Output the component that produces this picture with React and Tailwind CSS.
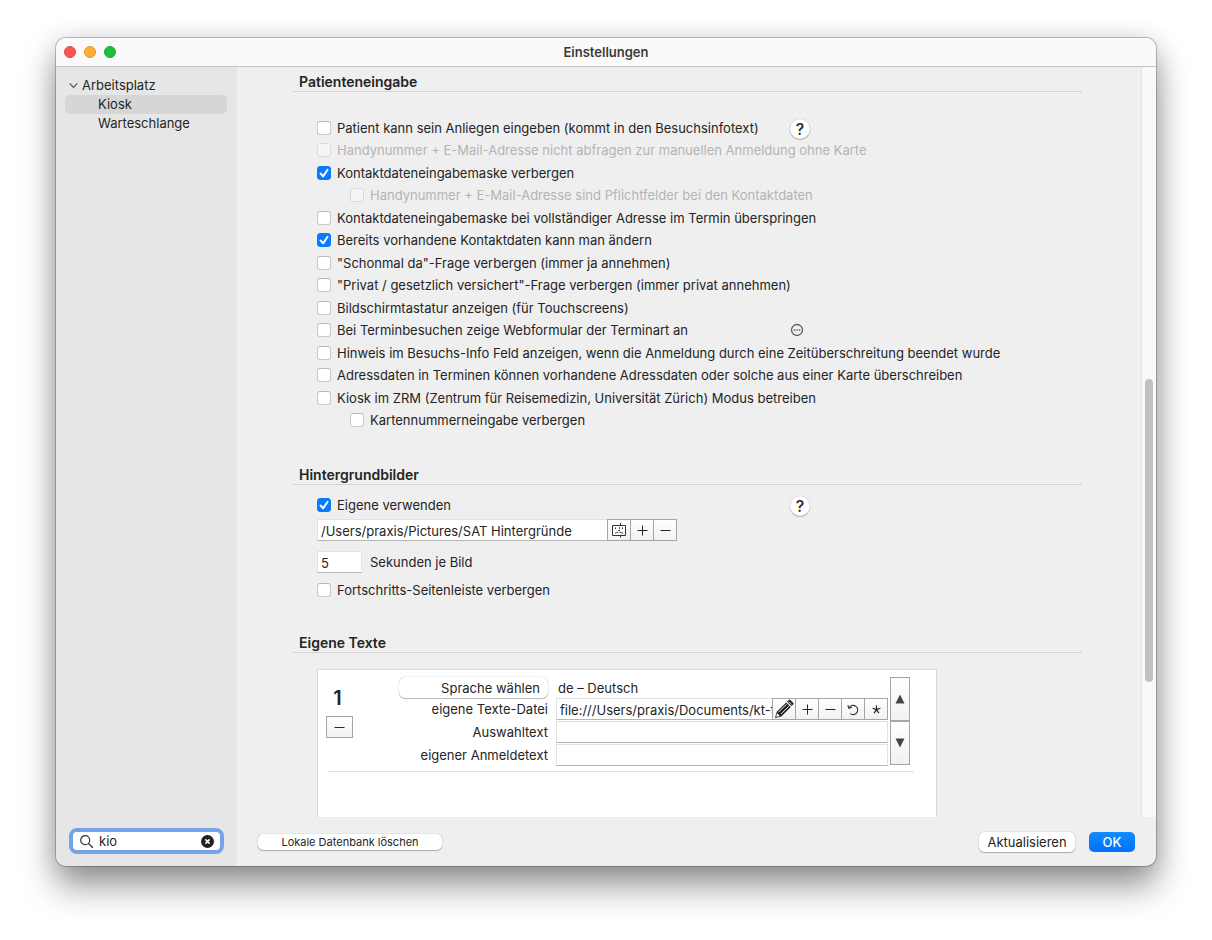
import React, { useState } from 'react';

const kioskOptions = [
  { id: 'anliegen', label: 'Patient kann sein Anliegen eingeben (kommt in den Besuchsinfotext)', help: true },
  { id: 'handy-abfragen', label: 'Handynummer + E-Mail-Adresse nicht abfragen zur manuellen Anmeldung ohne Karte', disabled: true },
  { id: 'maske-verbergen', label: 'Kontaktdateneingabemaske verbergen', checked: true },
  { id: 'handy-pflicht', label: 'Handynummer + E-Mail-Adresse sind Pflichtfelder bei den Kontaktdaten', disabled: true, indent: true },
  { id: 'maske-ueberspringen', label: 'Kontaktdateneingabemaske bei vollständiger Adresse im Termin überspringen' },
  { id: 'daten-aendern', label: 'Bereits vorhandene Kontaktdaten kann man ändern', checked: true },
  { id: 'schonmal-da', label: '"Schonmal da"-Frage verbergen (immer ja annehmen)' },
  { id: 'privat', label: '"Privat / gesetzlich versichert"-Frage verbergen (immer privat annehmen)' },
  { id: 'tastatur', label: 'Bildschirmtastatur anzeigen (für Touchscreens)' },
  { id: 'webformular', label: 'Bei Terminbesuchen zeige Webformular der Terminart an', more: true },
  { id: 'hinweis', label: 'Hinweis im Besuchs-Info Feld anzeigen, wenn die Anmeldung durch eine Zeitüberschreitung beendet wurde' },
  { id: 'adressdaten', label: 'Adressdaten in Terminen können vorhandene Adressdaten oder solche aus einer Karte überschreiben' },
  { id: 'zrm', label: 'Kiosk im ZRM (Zentrum für Reisemedizin, Universität Zürich) Modus betreiben' },
  { id: 'kartennummer', label: 'Kartennummerneingabe verbergen', indent: true },
];

const fieldClass = 'h-[22px] min-w-0 border border-[#e2e2e2] border-b-[#b5b5b5] bg-white px-[3px] pt-px text-[13px] outline-none';

function PlusIcon() {
  return (
    <svg width="11" height="11" viewBox="0 0 11 11" stroke="#262626" fill="none">
      <path d="M5.5 0.5v10M0.5 5.5h10" />
    </svg>
  );
}

function MinusIcon() {
  return (
    <svg width="11" height="11" viewBox="0 0 11 11" stroke="#262626" fill="none">
      <path d="M0.5 5.5h10" />
    </svg>
  );
}

// Finder face in a small frame
function FinderIcon() {
  return (
    <svg width="15" height="15" viewBox="0 0 15 15" stroke="#333" fill="none">
      <path d="M0.5 2.5h13v10H0.5z" />
      <path d="M8.5 0v2.5M8.5 12.5v2" />
      <path d="M7.5 4v3.5M6 7.5h2" strokeWidth="0.8" strokeDasharray="2 0.6" />
      <path d="M3.5 4.5v1.5M10.5 4.5v1.5" />
      <path d="M3 10.3l1.6-.9h1.6M7.6 9.4h1.6l1.8.9" strokeWidth="0.9" />
    </svg>
  );
}

function PencilIcon() {
  return (
    <svg width="20" height="20" viewBox="0 0 20 20" fill="#222" className="shrink-0">
      <path d="M1 19l1.8-6.2L12.2 3.4l4.6 4.6-9.5 9.4z" />
      <path d="M13 2.6l1.7-1.7q.8-.7 1.6 0l2.9 2.9q.7.8 0 1.6l-1.7 1.7z" />
      <path d="M4.5 13.2l8-8M6.8 15.2l8-8" stroke="#fff" strokeWidth="0.9" />
      <path d="M3.1 14.2l2.7 2.7-2.9.9-.7-.7z" fill="#fff" />
      <path d="M14.5 2.3l3.3 3.3" stroke="#fff" strokeWidth="0.7" />
    </svg>
  );
}

function ResetIcon() {
  return (
    <svg width="13" height="13" viewBox="0 0 13 13" stroke="#333" strokeWidth="1.1" fill="none">
      <path d="M2 4.9A4.6 4.6 0 1 1 3.2 10.6" />
      <path d="M0.8 2.2l1.2 3 3-1" />
    </svg>
  );
}

function StarIcon() {
  return (
    <svg width="9" height="9" viewBox="0 0 9 9" stroke="#222" strokeWidth="1.2" fill="none">
      <path d="M4.5 4.6V0.5M4.5 4.6L0.6 3.3M4.5 4.6l3.9-1.3M4.5 4.6L2.1 8.2M4.5 4.6l2.4 3.6" />
    </svg>
  );
}

function ToolButton({ label, children }) {
  return (
    <button
      type="button"
      aria-label={label}
      className="-ml-px flex h-[22px] w-6 shrink-0 items-center justify-center border border-[#a5a5a5] bg-linear-to-b from-white to-[#f1f1f1] first:ml-0"
    >
      {children}
    </button>
  );
}

function HelpButton() {
  return (
    <button
      type="button"
      aria-label="Hilfe"
      className="flex size-5 items-center justify-center self-end rounded-full bg-white text-base leading-5 font-medium shadow-[0_0_1px_rgba(0,0,0,0.35),0_1px_1px_rgba(0,0,0,0.25)]"
    >
      ?
    </button>
  );
}

function Option({ id, label, checked, disabled, indent, help, more }) {
  return (
    <div className={`flex h-[22px] items-center odd:h-[23px] ${indent ? 'pl-[33px]' : ''}`}>
      <div className={`flex items-center gap-1.5 whitespace-nowrap ${help || more ? 'w-[473px]' : ''}`}>
        <span className="relative flex size-3.5 shrink-0">
          <input
            id={id}
            type="checkbox"
            defaultChecked={checked}
            disabled={disabled}
            className="peer size-3.5 appearance-none rounded-[3px] border border-[#c9c9c9] border-t-[#b9b9b9] bg-white checked:border-[#0a7bff] checked:bg-[#0a7bff] disabled:border-[#d9d9d9] disabled:bg-[#f5f5f5]"
          />
          <svg viewBox="0 0 14 14" className="pointer-events-none absolute inset-0 hidden size-3.5 peer-checked:block">
            <path d="M3.5 7.4l2.6 3L10.6 3.7" fill="none" stroke="#fff" strokeWidth="1.9" strokeLinecap="round" strokeLinejoin="round" />
          </svg>
        </span>
        <label htmlFor={id} className={disabled ? 'text-[#b4b4b4]' : ''}>{label}</label>
      </div>
      {help && <HelpButton />}
      {more && (
        <button type="button" aria-label="Webformular wählen" className="flex">
          <svg width="14" height="14" viewBox="0 0 14 14" fill="none" stroke="#5c5c5c">
            <circle cx="7" cy="7" r="5.5" strokeWidth="1.3" />
            <path d="M3.8 7h1.4M6.3 7h1.4M8.8 7h1.4" strokeWidth="1.5" />
          </svg>
        </button>
      )}
    </div>
  );
}

function SectionTitle({ children }) {
  return (
    <h2 className="border-b border-[#d3d3d3] pl-1.5 text-sm leading-[18px] font-semibold">{children}</h2>
  );
}

function Sidebar() {
  const [query, setQuery] = useState('kio');

  return (
    <aside className="flex w-[181px] shrink-0 flex-col justify-between bg-[#e6e6e6] pt-[9px] pb-3">
      <nav className="pr-2.5 pl-[9px] leading-[19px]">
        <a href="#arbeitsplatz" className="flex items-center gap-1 pl-1">
          <svg width="9" height="9" viewBox="0 0 9 9" fill="none" stroke="#6b6b6b" strokeWidth="1.3" strokeLinecap="round">
            <path d="M1 2.8l3.5 3.7L8 2.8" />
          </svg>
          Arbeitsplatz
        </a>
        <a href="#kiosk" className="block rounded-[5px] bg-[#d6d6d6] pl-[33px]">Kiosk</a>
        <a href="#warteschlange" className="block pl-[33px]">Warteschlange</a>
      </nav>
      <div className="mx-[13px] flex h-[26px] items-center gap-1.5 rounded-lg border-4 border-[#74a4e8] bg-white pr-1.5 pl-[7px]">
        <svg width="13" height="13" viewBox="0 0 13 13" fill="none" stroke="#333" strokeWidth="1.2" strokeLinecap="round" className="shrink-0">
          <circle cx="5.2" cy="5.2" r="4.5" />
          <path d="M8.5 8.5l4 4" />
        </svg>
        <input
          type="text"
          aria-label="Einstellungen durchsuchen"
          value={query}
          onChange={(e) => setQuery(e.target.value)}
          className="min-w-0 flex-1 outline-none"
        />
        <button type="button" aria-label="Suche löschen" onClick={() => setQuery('')} className="shrink-0">
          <svg width="13" height="13" viewBox="0 0 13 13">
            <circle cx="6.5" cy="6.5" r="6.5" fill="#222" />
            <path d="M4.4 4.4l4.2 4.2M8.6 4.4l-4.2 4.2" stroke="#fff" strokeWidth="1.5" />
          </svg>
        </button>
      </div>
    </aside>
  );
}

function CustomTexts() {
  return (
    <div className="mt-4 ml-6 h-60 w-[620px] border border-[#d6d6d6] bg-white pt-[7px] pr-[22px] pl-2">
      <div className="flex pr-1">
        <div className="flex w-[27px] shrink-0 flex-col pt-[7px]">
          <span className="pr-1 text-center text-xl leading-7 font-semibold">1</span>
          <button
            type="button"
            aria-label="Eintrag entfernen"
            className="mt-1 flex h-[22px] items-center justify-center border border-[#a5a5a5] bg-linear-to-b from-white to-[#f1f1f1]"
          >
            <MinusIcon />
          </button>
        </div>
        <div className="ml-[46px] grid flex-1 grid-cols-[149px_1fr] items-center gap-x-2">
          <button
            type="button"
            className="h-[21px] rounded-md bg-white pr-2 text-right shadow-[0_0_1px_rgba(0,0,0,0.4),0_1px_1px_rgba(0,0,0,0.25)]"
          >
            Sprache wählen
          </button>
          <span className="pl-0.5">de – Deutsch</span>

          <label htmlFor="texte-datei" className="text-right">eigene Texte-Datei</label>
          <div className="flex">
            <input id="texte-datei" type="text" defaultValue="file:///Users/praxis/Documents/kt-texte" className={`${fieldClass} flex-1 border-r-0 pr-0`} />
            <div className="flex">
              <ToolButton label="Bearbeiten"><PencilIcon /></ToolButton>
              <ToolButton label="Hinzufügen"><PlusIcon /></ToolButton>
              <ToolButton label="Entfernen"><MinusIcon /></ToolButton>
              <ToolButton label="Zurücksetzen"><ResetIcon /></ToolButton>
              <ToolButton label="Platzhalter"><StarIcon /></ToolButton>
            </div>
          </div>

          <label htmlFor="auswahltext" className="text-right">Auswahltext</label>
          <input id="auswahltext" type="text" className={`${fieldClass} mt-px`} />

          <label htmlFor="anmeldetext" className="text-right">eigener Anmeldetext</label>
          <input id="anmeldetext" type="text" className={`${fieldClass} mt-px`} />
        </div>
        <div className="ml-0.5 flex w-5 shrink-0 flex-col">
          <button type="button" aria-label="Nach oben" className="flex h-11 items-center justify-center border border-[#a5a5a5] bg-linear-to-b from-white to-[#f1f1f1]">
            <svg width="10" height="10" viewBox="0 0 10 10" fill="#444"><path d="M5 0.5L9.5 9.5h-9z" /></svg>
          </button>
          <button type="button" aria-label="Nach unten" className="flex h-11 items-center justify-center border border-[#a5a5a5] bg-linear-to-b from-white to-[#f1f1f1]">
            <svg width="10" height="10" viewBox="0 0 10 10" fill="#444"><path d="M5 9.5L0.5 0.5h9z" /></svg>
          </button>
        </div>
      </div>
      <hr className="mt-[5px] ml-0.5 border-[#e2e2e2]" />
    </div>
  );
}

function App() {
  return (
    <div className="flex h-screen flex-col bg-white px-14 pt-[38px] pb-[74px] font-['Inter',sans-serif] text-[13px] leading-4 text-[#242424]">
      <div className="flex min-h-0 flex-1 flex-col overflow-hidden rounded-[10px] bg-[#efefef] shadow-[0_0_0_1px_rgba(0,0,0,0.22),0_20px_34px_rgba(0,0,0,0.42),0_0_24px_rgba(0,0,0,0.12)]">
        <header className="grid h-[29px] shrink-0 grid-cols-[1fr_auto_1fr] items-center border-b border-[#c4c4c4] bg-[#fafafa]">
          <div className="flex gap-2 pl-2">
            <button type="button" aria-label="Schließen" className="size-3 rounded-full border border-[#e2443f] bg-[#ff5450]" />
            <button type="button" aria-label="Minimieren" className="size-3 rounded-full border border-[#e0982c] bg-[#ffae33]" />
            <button type="button" aria-label="Maximieren" className="size-3 rounded-full border border-[#17a82f] bg-[#1ebe3c]" />
          </div>
          <h1 className="font-semibold text-[#3a3a3a]">Einstellungen</h1>
        </header>

        <div className="flex min-h-0 flex-1">
          <Sidebar />

          <div className="flex min-w-0 flex-1 flex-col">
            <div className="flex min-h-0 flex-1">
              <main className="min-w-0 flex-1 overflow-hidden pt-1.5 pr-[59px] pl-14">
                <section>
                  <SectionTitle>Patienteneingabe</SectionTitle>
                  <div className="pt-6 pl-6">
                    {kioskOptions.map((option) => (
                      <Option key={option.id} {...option} />
                    ))}
                  </div>
                </section>

                <section className="pt-[35px]">
                  <SectionTitle>Hintergrundbilder</SectionTitle>
                  <div className="pt-2 pl-6">
                    <Option id="eigene-bilder" label="Eigene verwenden" checked help />
                    <div className="mt-[3px] flex w-[360px]">
                      <input type="text" aria-label="Bilderordner" defaultValue="/Users/praxis/Pictures/SAT Hintergründe" className={`${fieldClass} flex-1 border-r-0`} />
                      <div className="flex">
                        <ToolButton label="Im Finder zeigen"><FinderIcon /></ToolButton>
                        <ToolButton label="Hinzufügen"><PlusIcon /></ToolButton>
                        <ToolButton label="Entfernen"><MinusIcon /></ToolButton>
                      </div>
                    </div>
                    <div className="mt-2.5 mb-1.5 flex items-center gap-2">
                      <input id="sekunden" type="text" defaultValue="5" className={`${fieldClass} w-[45px]`} />
                      <label htmlFor="sekunden">Sekunden je Bild</label>
                    </div>
                    <Option id="fortschritt" label="Fortschritts-Seitenleiste verbergen" />
                  </div>
                </section>

                <section className="pt-[33px]">
                  <SectionTitle>Eigene Texte</SectionTitle>
                  <CustomTexts />
                </section>
              </main>

              <div className="w-[15px] shrink-0 border-l border-[#e3e3e3] bg-[#f9f9f9] px-[3px] pt-[312px]">
                <div className="h-[303px] w-2 rounded-full bg-[#c1c1c1]" />
              </div>
            </div>

            <footer className="flex h-[49px] shrink-0 items-center pr-[21px] pl-[21px]">
              <button type="button" className="h-4 w-[184px] rounded-[5px] bg-white text-[11px] shadow-[0_0_1px_rgba(0,0,0,0.4),0_1px_1px_rgba(0,0,0,0.25)]">
                Lokale Datenbank löschen
              </button>
              <button type="button" className="ml-auto h-5 w-24 rounded-[5px] bg-white shadow-[0_0_1px_rgba(0,0,0,0.4),0_1px_1px_rgba(0,0,0,0.25)]">
                Aktualisieren
              </button>
              <button type="button" className="ml-3.5 h-5 w-[46px] rounded-[5px] bg-linear-to-b from-[#158cff] to-[#0070fb] font-medium text-white">
                OK
              </button>
            </footer>
          </div>
        </div>
      </div>
    </div>
  );
}

export default App;
